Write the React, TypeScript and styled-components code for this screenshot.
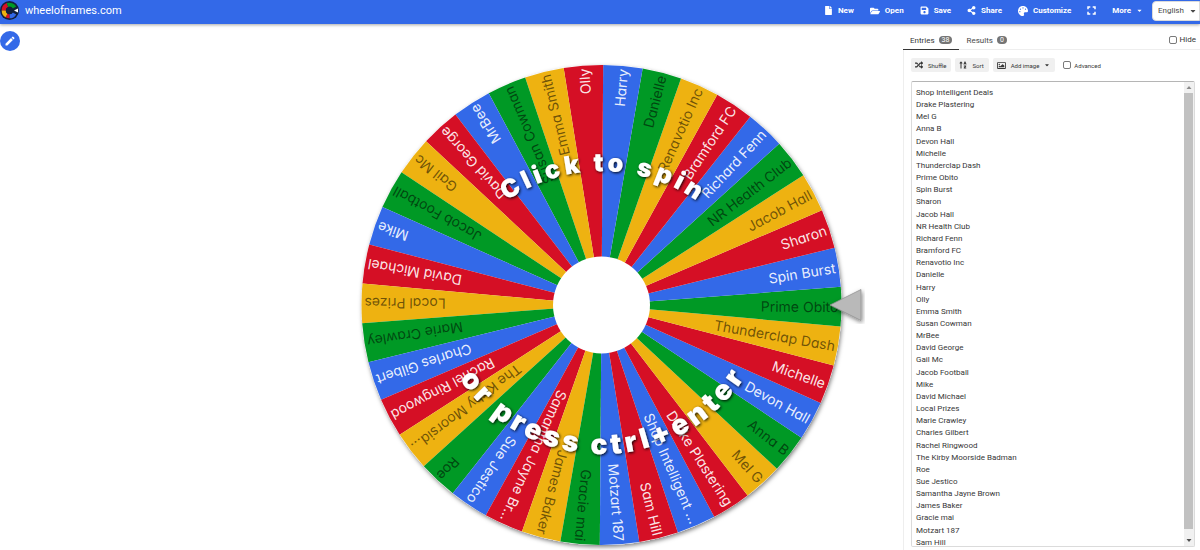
import React, { useState } from 'react';
import styled, { createGlobalStyle } from 'styled-components';
import {
  FaCaretDown,
  FaFile,
  FaFolderOpen,
  FaPalette,
  FaRandom,
  FaRegImage,
  FaSave,
  FaShareAlt,
  FaSortAlphaUp,
} from 'react-icons/fa';
import { MdEdit } from 'react-icons/md';

const ENTRIES = [
  'Shop Intelligent Deals', 'Drake Plastering', 'Mel G', 'Anna B', 'Devon Hall', 'Michelle',
  'Thunderclap Dash', 'Prime Obito', 'Spin Burst', 'Sharon', 'Jacob Hall', 'NR Health Club',
  'Richard Fenn', 'Bramford FC', 'Renavotio Inc', 'Danielle', 'Harry', 'Olly', 'Emma Smith',
  'Susan Cowman', 'MrBee', 'David George', 'Gail Mc', 'Jacob Football', 'Mike', 'David Michael',
  'Local Prizes', 'Marie Crawley', 'Charles Gilbert', 'Rachel Ringwood',
  'The Kirby Moorside Badman', 'Roe', 'Sue Jestico', 'Samantha Jayne Brown', 'James Baker',
  'Gracie mai', 'Motzart 187', 'Sam Hill',
];

const SLICES = [
  { fill: '#3369e8', ink: '#ffffff', inkOpacity: 0.9 },
  { fill: '#d50f25', ink: '#ffffff', inkOpacity: 0.9 },
  { fill: '#eeb211', ink: '#000000', inkOpacity: 0.55 },
  { fill: '#009925', ink: '#000000', inkOpacity: 0.55 },
];

const GlobalStyle = createGlobalStyle`
  *, *::before, *::after { box-sizing: border-box; }
  body {
    margin: 0;
    background: #fff;
    color: #363636;
    font-family: Roboto, "Liberation Sans", sans-serif;
    font-size: 8px;
  }
  button, select, textarea, input { font: inherit; color: inherit; margin: 0; }
  button { border: 0; padding: 0; background: none; cursor: pointer; }
`;

const Page = styled.div`
  display: flex;
  flex-direction: column;
  min-height: 100vh;
`;

const Header = styled.header`
  display: flex;
  align-items: center;
  height: 24px;
  padding-bottom: 3px;
  background: #3369e8;
  color: #fff;
  box-shadow: 0 1px 3px rgba(0, 0, 0, 0.35);
`;

const Brand = styled.a`
  display: flex;
  align-items: center;
  gap: 6px;
  color: inherit;
  font-size: 11px;
  text-decoration: none;
`;

const Nav = styled.nav`
  display: flex;
  align-items: center;
  gap: 16px;
  margin-left: auto;
`;

const NavButton = styled.button`
  display: flex;
  align-items: center;
  gap: 5px;
  height: 20px;
  font-weight: 700;
  white-space: nowrap;
`;

const SelectBox = styled.div`
  position: relative;
  width: 48px;
  height: 20px;
  margin-left: -7px;
  color: #4a4a4a;
`;

const LanguageSelect = styled.select`
  width: 100%;
  height: 100%;
  padding: 0 12px 0 5px;
  border: 1px solid #dbdbdb;
  border-radius: 4px 0 0 4px;
  background: #fff;
  appearance: none;
`;

const SelectCaret = styled(FaCaretDown)`
  position: absolute;
  top: 6px;
  right: 3px;
  pointer-events: none;
`;

const Main = styled.main`
  display: flex;
  flex: 1;
`;

const EditColumn = styled.div`
  flex: 0 0 25%;
  padding-top: 7px;
`;

const EditButton = styled.button`
  display: flex;
  align-items: center;
  justify-content: center;
  width: 20px;
  height: 20px;
  border-radius: 50%;
  background: #3369e8;
  color: #fff;
`;

const WheelButton = styled.button`
  flex: 1;
  min-width: 0;

  svg { display: block; width: 100%; }
`;

const SliceLabel = styled.text`
  font-family: Inter, Lato, sans-serif;
  font-size: 14px;
  font-feature-settings: "cv11";
  text-anchor: end;
  dominant-baseline: central;
`;

const ArcLabel = styled.text<{ $size: number }>`
  font-family: Inter, "Liberation Sans", sans-serif;
  font-size: ${p => p.$size}px;
  font-weight: 900;
  letter-spacing: 4px;
  fill: #fff;
  text-anchor: middle;
`;

const Sidebar = styled.aside`
  display: flex;
  flex: 0 0 297px;
  flex-direction: column;
  padding-top: 6px;
`;

const TabBar = styled.div`
  display: flex;
  align-items: center;
  height: 20px;
  padding-right: 4px;
  border-bottom: 1px solid #eee;
`;

const Tab = styled.button<{ $active?: boolean }>`
  display: flex;
  align-items: center;
  gap: 4px;
  height: 20px;
  padding: 2px 7px 0;
  border-bottom: 1px solid ${p => (p.$active ? '#363636' : 'transparent')};
  color: ${p => (p.$active ? '#363636' : '#4a4a4a')};
`;

const Badge = styled.span`
  height: 8px;
  padding: 0 3px;
  border-radius: 4px;
  background: #757575;
  color: #fff;
  font-size: 7px;
  line-height: 8px;
`;

const CheckLabel = styled.label<{ $small?: boolean; $end?: boolean }>`
  display: flex;
  align-items: center;
  gap: 3px;
  margin-left: ${p => (p.$end ? 'auto' : '4px')};
  font-size: ${p => (p.$small ? '6px' : '8px')};
`;

const CheckBox = styled.input`
  width: 8px;
  height: 8px;
  border: 1px solid #7a7a7a;
  border-radius: 2px;
  background: #fff;
  appearance: none;

  &:checked { background: #3369e8; }
`;

const Panel = styled.div`
  display: flex;
  flex: 1;
  flex-direction: column;
  gap: 9px;
  padding: 8px 5px 3px 7px;
  border-left: 1px solid #eee;
`;

const Tools = styled.div`
  display: flex;
  align-items: center;
  gap: 4px;
`;

const ToolButton = styled.button`
  display: flex;
  align-items: center;
  gap: 5px;
  height: 14px;
  padding: 0 5px 0 4px;
  border-radius: 2px;
  background: #f0f0f0;
  font-size: 6px;
`;

const EntriesBox = styled.div`
  display: flex;
  flex: 1;
  border: 1px solid #dbdbdb;
  border-top-color: #b5b5b5;
  border-radius: 2px;
`;

const EntriesText = styled.textarea`
  flex: 1;
  min-width: 0;
  padding: 5px 4px 0;
  border: 0;
  outline: 0;
  background: none;
  font-size: 8px;
  line-height: 1.52;
  resize: none;
  overflow: hidden;
`;

const Scrollbar = styled.div`
  display: flex;
  flex-direction: column;
  width: 10px;
  background: #f1f1f1;
`;

const ScrollArrow = styled.svg`
  width: 10px;
  height: 11px;
`;

const ScrollThumb = styled.div`
  flex: 1;
  margin: 0 1px 6px 0;
  background: #c1c1c1;
`;

const CX = 301.5;
const CY = 281;
const RADIUS = 240;
const STEP = 360 / ENTRIES.length;

const point = (angle: number, radius: number) => {
  const a = (angle * Math.PI) / 180;
  return `${CX + radius * Math.cos(a)} ${CY + radius * Math.sin(a)}`;
};

const shorten = (name: string) => (name.length > 17 ? `${name.slice(0, 17)}...` : name);

function Wheel() {
  return (
    <svg viewBox="0 0 603 526">
      <defs>
        <filter id="wheelShadow" x="-10%" y="-10%" width="120%" height="120%">
          <feDropShadow dx="1" dy="2" stdDeviation="2" floodColor="#000" floodOpacity="0.5" />
        </filter>
        <filter id="textShadow" x="-10%" y="-30%" width="120%" height="160%">
          <feDropShadow dx="1" dy="1" stdDeviation="1.5" floodColor="#000" floodOpacity="0.95" />
        </filter>
        <path id="topArc" d="M 146.5 252 A 167 167 0 0 1 456.5 252" />
        <path id="bottomArc" d="M 129.5 258 A 172 172 0 0 0 473.5 258" />
      </defs>
      <circle cx={CX} cy={CY} r={RADIUS} fill="#fff" filter="url(#wheelShadow)" />
      {ENTRIES.map((name, i) => {
        const slice = SLICES[i % 4];
        const mid = (7 - i) * STEP + 0.4;
        return (
          <g key={name}>
            <path
              fill={slice.fill}
              d={`M ${CX} ${CY} L ${point(mid - STEP / 2, RADIUS)} A ${RADIUS} ${RADIUS} 0 0 1 ${point(mid + STEP / 2, RADIUS)} Z`}
            />
            <SliceLabel
              x={CX + 237}
              y={CY}
              fill={slice.ink}
              fillOpacity={slice.inkOpacity}
              transform={`rotate(${mid} ${CX} ${CY})`}
            >
              {shorten(name)}
            </SliceLabel>
          </g>
        );
      })}
      <circle cx={CX} cy={CY} r="48.5" fill="#fff" />
      <path
        d="M 530 281 L 561 265.500 V 296.500 Z"
        fill="#b9b9b9"
        stroke="#8c8c8c"
        strokeWidth="0.700"
        filter="url(#wheelShadow)"
      />
      <ArcLabel $size={25} filter="url(#textShadow)">
        <textPath href="#topArc" startOffset="50.5%">Click to spin</textPath>
      </ArcLabel>
      <ArcLabel $size={28} filter="url(#textShadow)">
        <textPath href="#bottomArc" startOffset="50.5%">or press ctrl+enter</textPath>
      </ArcLabel>
    </svg>
  );
}

function Logo() {
  return (
    <svg width="19" height="19" viewBox="0 0 19 19" aria-hidden="true">
      <circle cx="9.500" cy="9.500" r="9.500" fill="#12203c" />
      <g fill="none" strokeWidth="4">
        <path d="M 3.700 9.500 A 5.800 5.800 0 0 1 7.500 4" stroke="#d50f25" />
        <path d="M 7.500 4 A 5.800 5.800 0 0 1 14.500 6.600" stroke="#009925" />
        <path d="M 14.500 12.400 A 5.800 5.800 0 0 1 9.500 15.300" stroke="#3369e8" />
        <path d="M 9.500 15.300 A 5.800 5.800 0 0 1 6.500 14.500" stroke="#d50f25" />
        <path d="M 6.500 14.500 A 5.800 5.800 0 0 1 3.700 9.500" stroke="#eeb211" />
      </g>
      <circle cx="9.500" cy="9.500" r="3.500" fill="#12203c" />
      <path d="M 14 9.500 L 18 7.500 V 11.500 Z" fill="#fff" />
    </svg>
  );
}

function FullscreenIcon() {
  return (
    <svg width="9" height="9" viewBox="0 0 9 9" fill="none" stroke="currentColor" strokeWidth="1.500" aria-hidden="true">
      <path d="M 1 3.300 V 1 H 3.300 M 5.700 1 H 8 V 3.300 M 8 5.700 V 8 H 5.700 M 3.300 8 H 1 V 5.700" />
    </svg>
  );
}

export default function App() {
  const [text, setText] = useState(ENTRIES.join('\n'));

  return (
    <Page>
      <GlobalStyle />
      <Header>
        <Brand href="#">
          <Logo />
          wheelofnames.com
        </Brand>
        <Nav>
          <NavButton><FaFile size={9} />New</NavButton>
          <NavButton><FaFolderOpen size={10} />Open</NavButton>
          <NavButton><FaSave size={9} />Save</NavButton>
          <NavButton><FaShareAlt size={9} />Share</NavButton>
          <NavButton><FaPalette size={10} />Customize</NavButton>
          <NavButton aria-label="Fullscreen"><FullscreenIcon /></NavButton>
          <NavButton>More<FaCaretDown size={7} /></NavButton>
          <SelectBox>
            <LanguageSelect aria-label="Language" defaultValue="English">
              <option>English</option>
            </LanguageSelect>
            <SelectCaret size={8} />
          </SelectBox>
        </Nav>
      </Header>
      <Main>
        <EditColumn>
          <EditButton aria-label="Edit title"><MdEdit size={12} /></EditButton>
        </EditColumn>
        <WheelButton aria-label="Spin the wheel"><Wheel /></WheelButton>
        <Sidebar>
          <TabBar>
            <Tab $active>Entries <Badge>38</Badge></Tab>
            <Tab>Results <Badge>0</Badge></Tab>
            <CheckLabel $end><CheckBox type="checkbox" />Hide</CheckLabel>
          </TabBar>
          <Panel>
            <Tools>
              <ToolButton><FaRandom size={8} />Shuffle</ToolButton>
              <ToolButton><FaSortAlphaUp size={8} />Sort</ToolButton>
              <ToolButton><FaRegImage size={9} />Add image<FaCaretDown size={6} /></ToolButton>
              <CheckLabel $small><CheckBox type="checkbox" />Advanced</CheckLabel>
            </Tools>
            <EntriesBox>
              <EntriesText
                aria-label="Entries"
                spellCheck={false}
                value={text}
                onChange={e => setText(e.target.value)}
              />
              <Scrollbar>
                <ScrollArrow viewBox="0 0 10 11"><path d="M 2.500 7 L 5 4 L 7.500 7 Z" fill="#8a8a8a" /></ScrollArrow>
                <ScrollThumb />
                <ScrollArrow viewBox="0 0 10 11"><path d="M 2.500 4 L 5 7 L 7.500 4 Z" fill="#505050" /></ScrollArrow>
              </Scrollbar>
            </EntriesBox>
          </Panel>
        </Sidebar>
      </Main>
    </Page>
  );
}
